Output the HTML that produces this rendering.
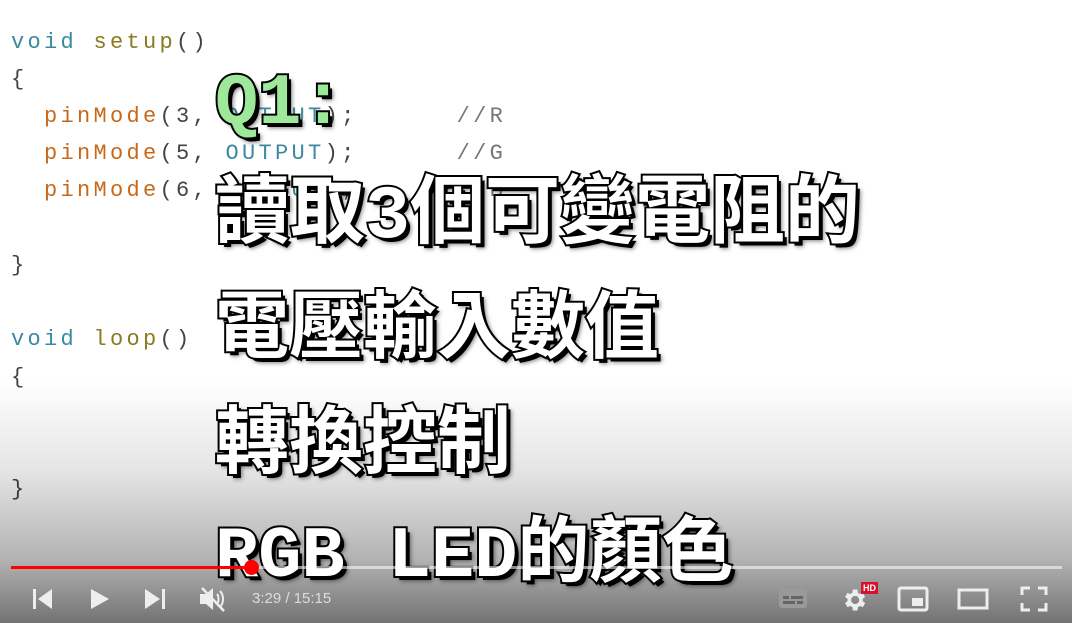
<!DOCTYPE html>
<html><head><meta charset="utf-8"><style>
html,body{margin:0;padding:0}
body{width:1072px;height:623px;overflow:hidden;position:relative;background:#fff;font-family:"Liberation Sans","Noto Sans CJK TC",sans-serif}
.grad{position:absolute;left:0;top:0;width:1072px;height:623px;background:linear-gradient(to bottom,rgba(0,0,0,0) 0,rgba(0,0,0,0) 380px,rgba(0,0,0,.1) 470px,rgba(0,0,0,.3) 560px,rgba(0,0,0,.55) 623px)}
.code{position:absolute;left:11px;font-family:"Liberation Mono",monospace;font-size:22px;letter-spacing:3.3px;color:#444;white-space:pre;line-height:24px}
.k{color:#3b8aa0}.o{color:#c8691a}.y{color:#8a7a20}.g{color:#777}
.big{position:absolute;left:215px;font-family:"Liberation Mono","Noto Sans CJK TC",monospace;font-weight:700;font-size:73px;color:#fff;-webkit-text-stroke:4px #000;paint-order:stroke fill;text-shadow:4px 4px 0 #000,5px 5px 4px rgba(0,0,0,.5);white-space:nowrap;line-height:80px}
.ic{position:absolute;fill:#eee}
</style></head><body>
<div class="code" style="top:31px"><span class="k">void</span> <span class="y">setup</span>()</div>
<div class="code" style="top:68px">{</div>
<div class="code" style="top:105px">  <span class="o">pinMode</span>(3, <span class="k">OUTPUT</span>);      <span class="g">//R</span></div>
<div class="code" style="top:142px">  <span class="o">pinMode</span>(5, <span class="k">OUTPUT</span>);      <span class="g">//G</span></div>
<div class="code" style="top:179px">  <span class="o">pinMode</span>(6, <span class="k">OUTPUT</span>);      <span class="g">//B</span></div>
<div class="code" style="top:254px">}</div>
<div class="code" style="top:328px"><span class="k">void</span> <span class="y">loop</span>()</div>
<div class="code" style="top:366px">{</div>
<div class="code" style="top:478px">}</div>
<div class="grad"></div>
<div class="big" style="top:64px;color:#9ee89a;font-size:72px">Q1:</div>
<div class="big" style="top:178px;font-size:75px">讀取3個可變電阻的</div>
<div class="big" style="top:293px;font-size:74px">電壓輸入數值</div>
<div class="big" style="top:408px;font-size:74px">轉換控制</div>
<div class="big" style="top:517px;font-size:72px">RGB LED的顏色</div>
<div style="position:absolute;left:11px;top:566px;width:1051px;height:3px;background:rgba(255,255,255,.55)"></div>
<div style="position:absolute;left:11px;top:566px;width:240px;height:3px;background:#f00"></div>
<div style="position:absolute;left:244px;top:560px;width:15px;height:15px;border-radius:50%;background:#f00"></div>
<svg class="ic" style="left:30px;top:587px" width="26" height="24" viewBox="0 0 26 24"><rect x="3" y="2" width="3" height="20"/><path d="M22 2 L8 12 L22 22Z"/></svg>
<svg class="ic" style="left:88px;top:587px" width="24" height="24" viewBox="0 0 24 24"><path d="M3 2 L21 12 L3 22Z"/></svg>
<svg class="ic" style="left:143px;top:587px" width="26" height="24" viewBox="0 0 26 24"><path d="M2 2 L17 12 L2 22Z"/><rect x="19" y="2" width="3" height="20"/></svg>
<svg style="position:absolute;left:198px;top:585px" width="30" height="28" viewBox="0 0 30 28"><path d="M2 9h6l7-6v22l-7-6H2z" fill="#eee"/><path d="M19 9c2 2 2 8 0 10M22 6c4 4 4 12 0 16" stroke="#eee" stroke-width="2" fill="none"/><path d="M4 3L26 26" stroke="#eee" stroke-width="2.5"/></svg>
<div style="position:absolute;left:252px;top:590px;font-size:15px;color:#ddd">3:29 / 15:15</div>
<svg style="position:absolute;left:778px;top:586px" width="30" height="24" viewBox="0 0 30 24"><rect x="1" y="2" width="28" height="20" rx="3" fill="#999"/><rect x="5" y="10" width="6" height="3" fill="#666"/><rect x="13" y="10" width="12" height="3" fill="#666"/><rect x="5" y="15" width="12" height="3" fill="#666"/><rect x="19" y="15" width="6" height="3" fill="#666"/></svg>
<svg style="position:absolute;left:840px;top:586px" width="28" height="28" viewBox="0 0 24 24"><path fill="#eee" d="M19.4 13a7.5 7.5 0 0 0 0-2l2.1-1.6-2-3.5-2.5 1a7 7 0 0 0-1.7-1L15 3h-4l-.4 2.9a7 7 0 0 0-1.7 1l-2.5-1-2 3.5L6.5 11a7.5 7.5 0 0 0 0 2l-2.1 1.6 2 3.5 2.5-1a7 7 0 0 0 1.7 1L11 21h4l.4-2.9a7 7 0 0 0 1.7-1l2.5 1 2-3.5zM13 15.5a3.5 3.5 0 1 1 0-7 3.5 3.5 0 0 1 0 7z"/></svg>
<div style="position:absolute;left:861px;top:582px;background:#d8102a;color:#fff;font-size:9px;font-weight:bold;padding:1px 2px;line-height:10px">HD</div>
<svg style="position:absolute;left:897px;top:586px" width="32" height="26" viewBox="0 0 32 26"><rect x="2" y="2" width="28" height="22" rx="2" fill="none" stroke="#eee" stroke-width="3"/><rect x="15" y="12" width="11" height="8" fill="#eee"/></svg>
<svg style="position:absolute;left:957px;top:587px" width="32" height="24" viewBox="0 0 32 24"><rect x="2" y="3" width="28" height="18" fill="none" stroke="#eee" stroke-width="3"/></svg>
<svg style="position:absolute;left:1019px;top:585px" width="30" height="28" viewBox="0 0 30 28" fill="none" stroke="#eee" stroke-width="3"><path d="M3 10V3h8M19 3h8v7M27 18v7h-8M11 25H3v-7"/></svg>
</body></html>
